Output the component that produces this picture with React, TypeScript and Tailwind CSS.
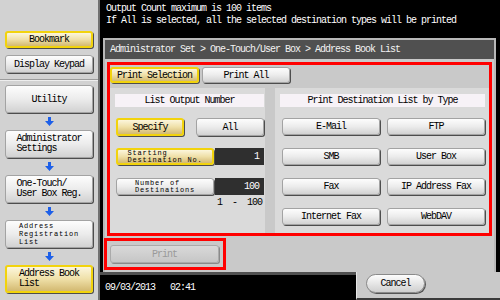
import type { ReactNode } from "react";

type BtnProps = { children: ReactNode; className?: string; yellow?: boolean };

function Btn({ children, className = "", yellow = false }: BtnProps) {
  const skin = yellow
    ? "border-2 border-[#f2d30c] bg-linear-to-b from-[#fcf6dc] via-[#efe0a8] to-[#d3b971]"
    : "border border-[#a3a3a3] bg-linear-to-b from-[#fdfdfd] via-[#ececec] to-[#d2d2d2]";
  return (
    <div className={`flex items-center justify-center rounded-[3px] shadow-[1px_1px_0_#4d4d4d] ${skin} ${className}`}>
      {children}
    </div>
  );
}

function DownArrow() {
  return (
    <div className="h-[17px] flex items-center justify-center">
      <svg width="9" height="9" viewBox="0 0 9 9">
        <path d="M3 0h3v4h3L4.5 9 0 4h3z" fill="#1d5fe8" />
      </svg>
    </div>
  );
}

function ValueBox({ value }: { value: string }) {
  return (
    <div className="w-[49px] h-[17px] ml-[1px] bg-[#2f2f2f] text-white flex items-center justify-end pr-[5px]">
      {value}
    </div>
  );
}

const destinations = ["E-Mail", "FTP", "SMB", "User Box", "Fax", "IP Address Fax", "Internet Fax", "WebDAV"];

export default function App() {
  return (
    <div className="flex w-[500px] h-[300px] overflow-hidden font-['Liberation_Mono','DejaVu_Sans_Mono',monospace] text-[10px] tracking-[-1px] text-black">
      {/* side menu */}
      <aside className="w-[100px] shrink-0 h-full bg-[#d2d2d2] border-r-2 border-[#707070] flex flex-col px-[5px] pt-[31px]">
        <Btn yellow className="h-[17px]">Bookmark</Btn>
        <Btn className="h-[18px] mt-[7px]">Display Keypad</Btn>
        <div className="-mx-[5px] mt-[6px] h-[2px] border-t border-[#9c9c9c] border-b border-b-[#eeeeee]" />
        <Btn className="h-[28px] mt-[4px]">Utility</Btn>
        <DownArrow />
        <Btn className="h-[28px]">
          <span className="text-left leading-[10px]">Administrator<br />Settings</span>
        </Btn>
        <DownArrow />
        <Btn className="h-[28px]">
          <span className="text-left leading-[10px]">One-Touch/<br />User Box Reg.</span>
        </Btn>
        <DownArrow />
        <Btn className="h-[28px]">
          <span className="text-left text-[7px] leading-[8px] tracking-[0.8px]">Address<br />Registration<br />List</span>
        </Btn>
        <DownArrow />
        <Btn yellow className="h-[28px]">
          <span className="text-left leading-[10px]">Address Book<br />List</span>
        </Btn>
      </aside>

      <main className="flex-1 h-full bg-black flex flex-col">
        <div className="h-[38px] shrink-0 px-[6px] pt-[3px] text-white leading-[12px]">
          <p>Output Count maximum is 100 items</p>
          <p>If All is selected, all the selected destination types will be printed</p>
        </div>

        <section className="flex-1 min-h-0 ml-[3px] mr-[4px] border-x-2 border-t-2 border-[#b8b8b8] flex flex-col">
          <div className="h-[19px] shrink-0 bg-[#505050] text-[#f2f2f2] pl-[5px] flex items-center">
            Administrator Set &gt; One-Touch/User Box &gt; Address Book List
          </div>

          <div className="flex-1 bg-[#c9c9c9] pl-[2px] pt-[3px] flex flex-col">
            <div className="w-[385px] h-[174px] border-[3px] border-[#ff0000] flex flex-col">
              <div className="flex gap-[3px] mt-[2px]">
                <Btn yellow className="w-[89px] h-[16px]">Print Selection</Btn>
                <Btn className="w-[88px] h-[16px]">Print All</Btn>
              </div>

              <div className="flex gap-[10px] mt-[5px] flex-1 min-h-0">
                <div className="w-[155px] bg-[#dadada] pt-[6px] pl-[5px] pr-[1px] flex flex-col">
                  <div className="h-[13px] bg-[#f7f2f7] flex items-center justify-center">List Output Number</div>
                  <div className="flex mt-[11px] pl-[1px]">
                    <Btn yellow className="w-[68px] h-[18px]">Specify</Btn>
                    <Btn className="w-[68px] h-[18px] ml-[12px]">All</Btn>
                  </div>
                  <div className="flex mt-[12px] pl-[1px]">
                    <Btn yellow className="w-[98px] h-[17px]">
                      <span className="text-left text-[7px] leading-[7px] tracking-[0.8px]">Starting<br />Destination No.</span>
                    </Btn>
                    <ValueBox value="1" />
                  </div>
                  <div className="flex mt-[13px] pl-[1px]">
                    <Btn className="w-[98px] h-[17px]">
                      <span className="text-left text-[7px] leading-[7px] tracking-[0.8px]">Number of<br />Destinations</span>
                    </Btn>
                    <ValueBox value="100" />
                  </div>
                  <div className="mt-[3px] pr-[2px] text-right whitespace-pre leading-[10px]">1  -  100</div>
                </div>

                <div className="flex-1 bg-[#dadada] pt-[6px] pl-[5px] pr-[4px] flex flex-col">
                  <div className="h-[13px] bg-[#f7f2f7] flex items-center justify-center">Print Destination List by Type</div>
                  <div className="grid grid-cols-2 gap-x-[7px] gap-y-[13px] mt-[11px] pl-[2px]">
                    {destinations.map((d) => (
                      <Btn key={d} className="h-[17px]">{d}</Btn>
                    ))}
                  </div>
                </div>
              </div>
            </div>

            <div className="w-[122px] h-[32px] ml-[-3px] mt-[2px] border-[3px] border-[#ff0000]">
              <div className="ml-[3px] mt-[4px] w-[109px] h-[18px] rounded-[3px] border border-[#aaaaaa] bg-linear-to-b from-[#d9d9d9] to-[#c6c6c6] shadow-[1px_1px_0_#8a8a8a] flex items-center justify-center text-[#9a9a9a]">
                Print
              </div>
            </div>
          </div>
        </section>

        <footer className="h-[28px] shrink-0 flex">
          <div className="w-[256px] bg-black border-t-[3px] border-[#505050] text-white flex items-center pl-[5px]">
            <span>09/03/2013</span>
            <span className="ml-[15px]">02:41</span>
          </div>
          <div className="flex-1 bg-[#c9c9c9] border-l border-[#e6e6e6] border-b-2 border-b-[#3a3a3a] pl-[9px] pt-[2px]">
            <div className="w-[59px] h-[19px] rounded-full border border-[#8a8a8a] bg-linear-to-b from-[#fdfdfd] to-[#cfcfcf] shadow-[1px_1px_0_#555] flex items-center justify-center">
              Cancel
            </div>
          </div>
        </footer>
      </main>
    </div>
  );
}
